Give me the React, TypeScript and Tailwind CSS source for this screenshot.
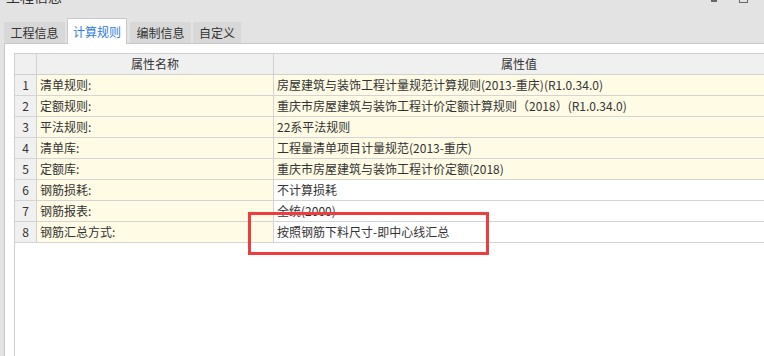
import React from "react";

const rows = [
  { name: "清单规则:", value: "房屋建筑与装饰工程计量规范计算规则(2013-重庆)(R1.0.34.0)", hl: true },
  { name: "定额规则:", value: "重庆市房屋建筑与装饰工程计价定额计算规则（2018）(R1.0.34.0)", hl: true },
  { name: "平法规则:", value: "22系平法规则", hl: true },
  { name: "清单库:", value: "工程量清单项目计量规范(2013-重庆)", hl: true },
  { name: "定额库:", value: "重庆市房屋建筑与装饰工程计价定额(2018)", hl: true },
  { name: "钢筋损耗:", value: "不计算损耗", hl: false },
  { name: "钢筋报表:", value: "全统(2000)", hl: false },
  { name: "钢筋汇总方式:", value: "按照钢筋下料尺寸-即中心线汇总", hl: false },
];

const tabs = ["工程信息", "计算规则", "编制信息", "自定义"];

const App = () => {
  return (
    <div
      className="relative w-[764px] h-[356px] bg-[#e3e3e3] overflow-hidden flex flex-col text-[12px] text-[#333]"
      style={{ fontFamily: '"Noto Sans CJK SC", "Noto Sans", sans-serif' }}
    >
      {/* title bar (cut off at top) */}
      <div className="h-[18px] flex justify-between overflow-hidden">
        <div className="pl-[6px] -mt-[14px] text-[14px] text-[#333]">工程信息</div>
        <div className="flex gap-[22px] pr-[16px]">
          <div className="w-[6px] h-[2px] bg-[#666] ml-[2px]" />
          <div className="w-[9px] h-[3px] border-b border-x border-[#666]" />
        </div>
      </div>

      {/* tabs */}
      <div className="h-[25px] flex items-end pl-[4px] gap-[2px]">
        {tabs.map((t, i) =>
          i === 1 ? (
            <div
              key={t}
              className="h-[26px] -mb-[1px] w-[60px] bg-white border border-b-0 border-[#c8c8c8] rounded-t-[2px] flex items-center justify-center text-[#2f7be0] z-10"
            >
              {t}
            </div>
          ) : (
            <div
              key={t}
              className={`h-[21px] ${i === 3 ? "w-[48px]" : "w-[61px]"} ${i === 2 ? "ml-[1px]" : ""} bg-[#d8d8d8] flex items-center justify-center`}
            >
              {t}
            </div>
          )
        )}
      </div>

      {/* content panel */}
      <div className="flex-1 ml-[4px] bg-white border-l border-t border-[#c8c8c8] pt-[9px] pl-[9px] flex flex-col">
        <div className="flex-1 border-l border-t border-[#d0d0d0] flex flex-col">
          <div className="flex h-[21px] border-b border-[#d0d0d0] bg-[#f0f0f0]">
            <div className="w-[22px] border-r border-[#d0d0d0]" />
            <div className="w-[237px] border-r border-[#d0d0d0] flex items-center justify-center">属性名称</div>
            <div className="flex-1 flex items-center justify-center">属性值</div>
          </div>
          {rows.map((r, i) => (
            <div key={i} className="flex h-[21px] border-b border-[#d4d4d4]">
              <div className="w-[22px] border-r border-[#d0d0d0] bg-[#f0f0f0] flex items-center justify-center">
                {i + 1}
              </div>
              <div className="w-[237px] border-r border-[#d4d4d4] bg-[#fffbe5] flex items-center pl-[3px]">
                {r.name}
              </div>
              <div className={`flex-1 flex items-center pl-[3px] ${r.hl ? "bg-[#fffbe5]" : "bg-white"}`}>
                {r.value}
              </div>
            </div>
          ))}
        </div>
      </div>

      {/* annotation box */}
      <div className="absolute left-[248px] top-[212px] w-[241px] h-[43px] border-[3px] border-[#f03c3c]" />
    </div>
  );
};

export default App;
